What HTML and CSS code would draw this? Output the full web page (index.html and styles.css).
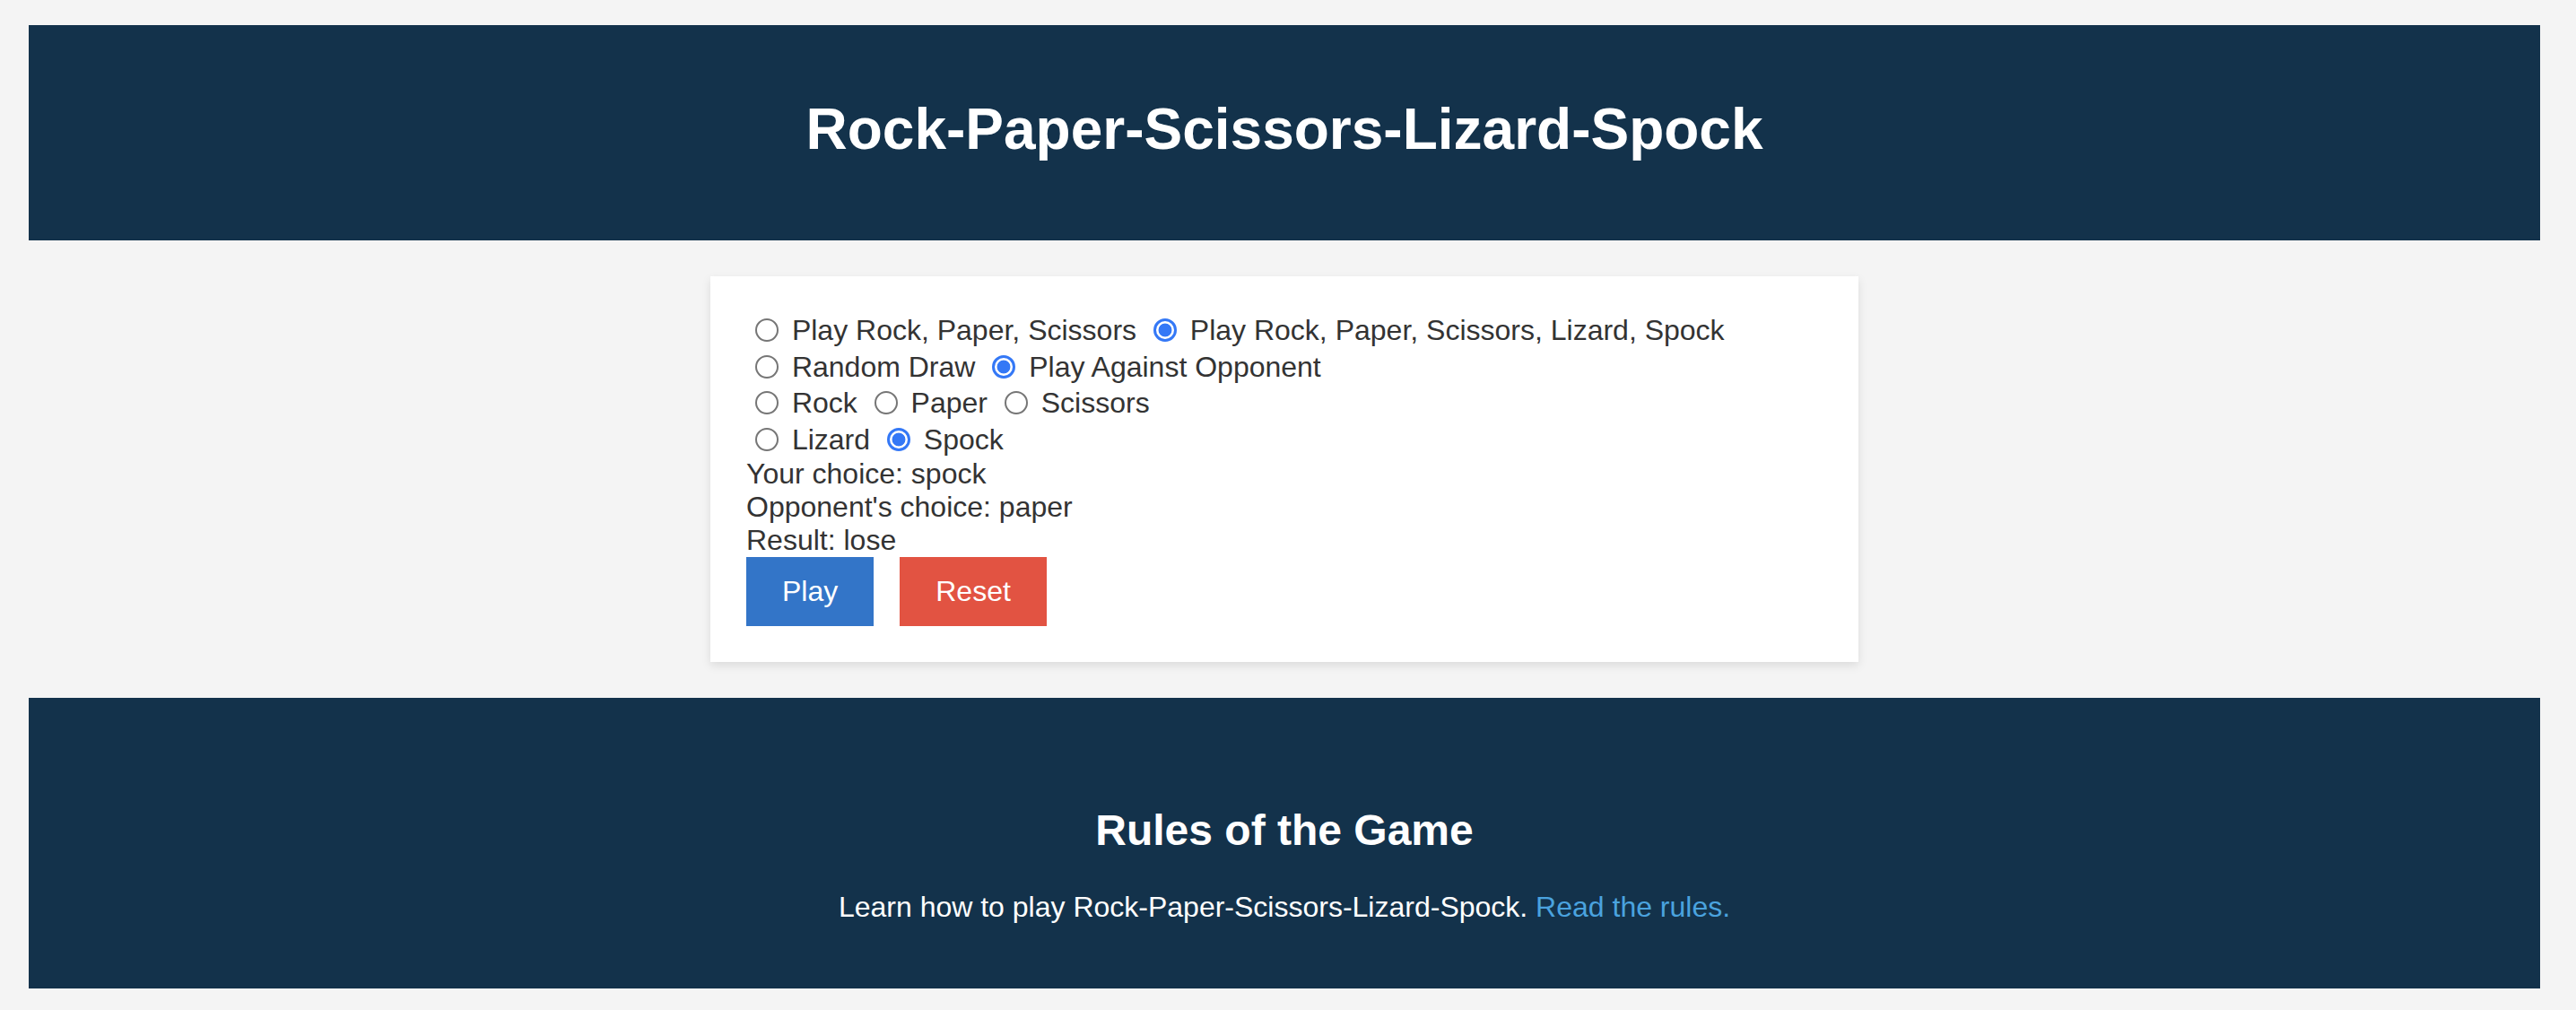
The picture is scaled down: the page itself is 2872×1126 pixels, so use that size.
FILE: index.html
```html
<!DOCTYPE html>
<html lang="en">
<head>
<meta charset="utf-8">
<title>Rock-Paper-Scissors-Lizard-Spock</title>
<link rel="stylesheet" href="styles.css">
</head>
<body>
<header class="site-header">
  <h1 class="site-title">Rock-Paper-Scissors-Lizard-Spock</h1>
</header>
<main class="game-card">
  <div class="radio-row">
    <label class="opt"><input class="radio" type="radio" name="mode"> Play Rock, Paper, Scissors</label>
    <label class="opt"><input class="radio" type="radio" name="mode" checked> Play Rock, Paper, Scissors, Lizard, Spock</label>
  </div>
  <div class="radio-row">
    <label class="opt"><input class="radio" type="radio" name="opp"> Random Draw</label>
    <label class="opt"><input class="radio" type="radio" name="opp" checked> Play Against Opponent</label>
  </div>
  <div class="radio-row">
    <label class="opt"><input class="radio" type="radio" name="shot"> Rock</label>
    <label class="opt"><input class="radio" type="radio" name="shot"> Paper</label>
    <label class="opt"><input class="radio" type="radio" name="shot"> Scissors</label>
  </div>
  <div class="radio-row">
    <label class="opt"><input class="radio" type="radio" name="shot"> Lizard</label>
    <label class="opt"><input class="radio" type="radio" name="shot" checked> Spock</label>
  </div>
  <div class="result-line">Your choice: spock</div>
  <div class="result-line">Opponent's choice: paper</div>
  <div class="result-line">Result: lose</div>
  <div class="actions">
    <button class="btn btn-play" type="button">Play</button>
    <button class="btn btn-reset" type="button">Reset</button>
  </div>
</main>
<footer class="rules">
  <h2 class="rules-title">Rules of the Game</h2>
  <p class="rules-text">Learn how to play Rock-Paper-Scissors-Lizard-Spock. <a class="rules-link" href="#">Read the rules.</a></p>
</footer>
</body>
</html>
```

FILE: styles.css
```css
html {
  background: #f4f4f4;
}

body {
  margin: 0;
  padding: 28px 40px 0 32px;
  background: #f4f4f4;
  font-family: "Liberation Sans", Arial, sans-serif;
  font-size: 32px;
  color: #333333;
}

.site-header {
  background: #13324b;
  padding: 36px 0 44px;
  text-align: center;
}

.site-title {
  margin: 43px 0;
  font-size: 64px;
  font-weight: bold;
  color: #ffffff;
  line-height: normal;
}

.game-card {
  display: block;
  box-sizing: border-box;
  width: 1280px;
  margin: 40px auto;
  padding: 40px;
  background: #ffffff;
  box-shadow: 0 4px 10px rgba(0, 0, 0, 0.1);
}

.radio-row {
  height: 40.5px;
  line-height: 41px;
  white-space: nowrap;
}

.opt {
  cursor: pointer;
}

.radio {
  -webkit-appearance: none;
  appearance: none;
  box-sizing: border-box;
  width: 26px;
  height: 26px;
  margin: 7px 6px 0 10px;
  vertical-align: top;
  border: 2px solid #767676;
  border-radius: 50%;
  background: #ffffff;
}

.radio:checked {
  border: 3px solid #3478f6;
  background: radial-gradient(circle, #3478f6 0, #3478f6 7px, #ffffff 7.8px);
}

.result-line {
  line-height: normal;
}

.actions {
  display: flex;
  gap: 29px;
}

.btn {
  border: none;
  margin: 0;
  padding: 20px 40px;
  font-family: "Liberation Sans", Arial, sans-serif;
  font-size: 32px;
  line-height: normal;
  color: #ffffff;
  cursor: pointer;
}

.btn-play {
  background: #3375c8;
}

.btn-reset {
  background: #e25342;
}

.rules {
  background: #13324b;
  padding: 80px 0 40px;
  text-align: center;
  color: #ffffff;
}

.rules-title {
  margin: 40px 0;
  font-size: 48px;
  font-weight: bold;
  line-height: normal;
}

.rules-text {
  margin: 32px 0;
  line-height: normal;
}

.rules-link {
  color: #4aa3df;
  text-decoration: none;
}
```
